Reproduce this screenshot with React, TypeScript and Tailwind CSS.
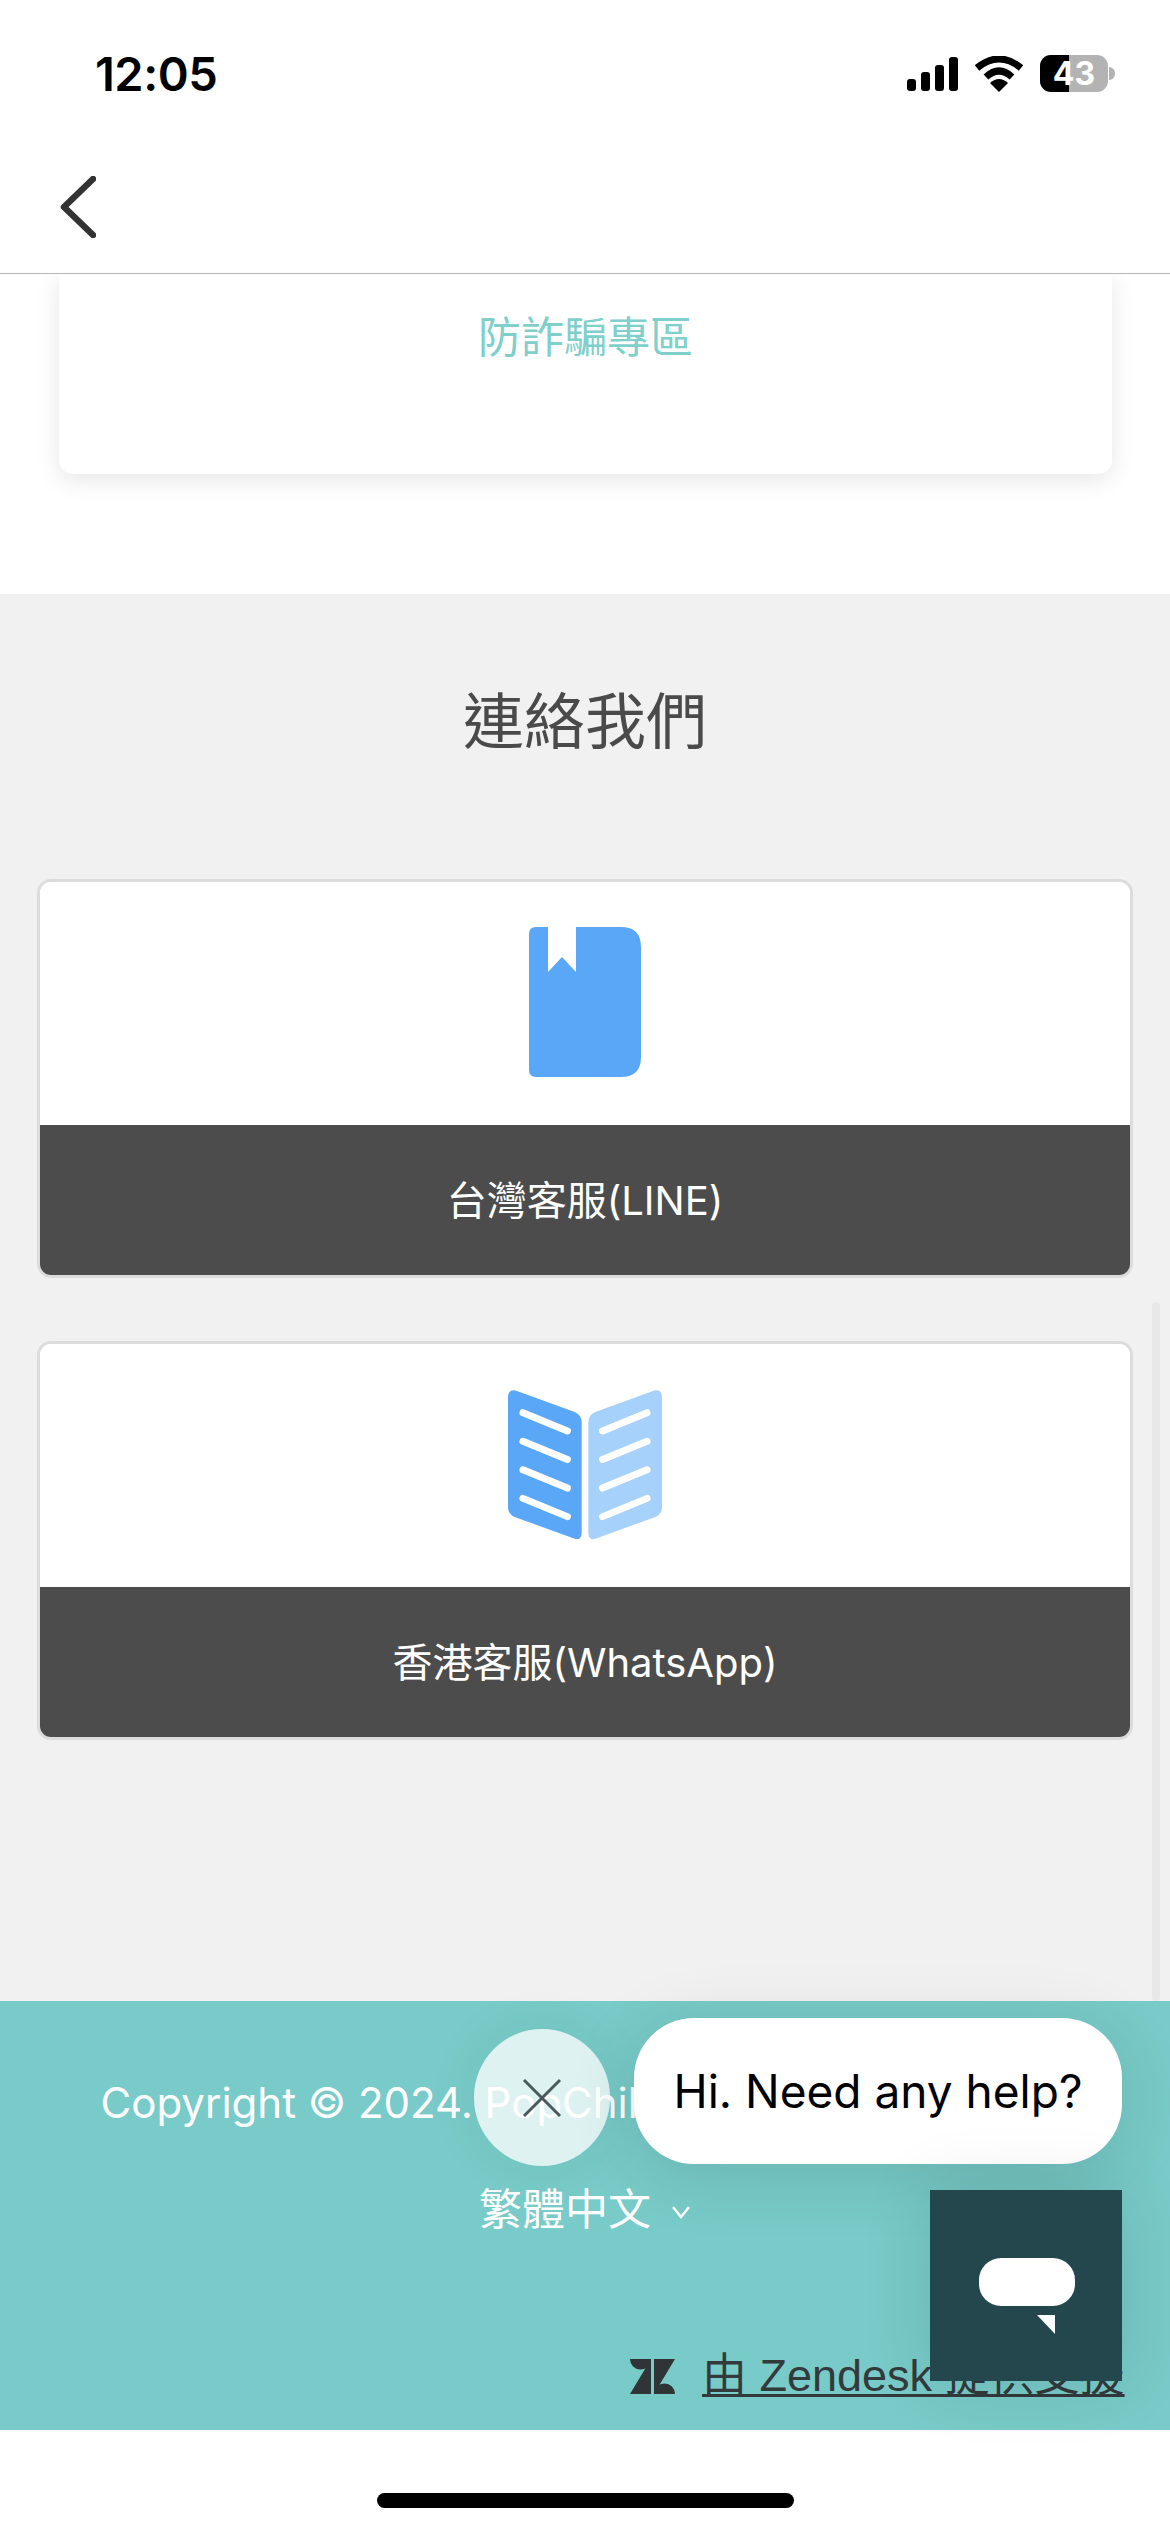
const cjk = "font-['Inter','Noto_Sans_CJK_TC',sans-serif]";

function StatusIcons() {
  return (
    <div className="flex items-center">
      <svg width="51" height="34" viewBox="0 0 51 34" className="mr-[17px]">
        <rect x="0" y="22" width="9" height="12" rx="3" fill="#000" />
        <rect x="14" y="15" width="9" height="19" rx="3" fill="#000" />
        <rect x="28" y="8" width="9" height="26" rx="3" fill="#000" />
        <rect x="42" y="0" width="9" height="34" rx="3" fill="#000" />
      </svg>
      <svg width="48" height="36" viewBox="0 0 48 36" className="mr-[17px]">
        <path d="M2 12 Q24 -6 46 12" fill="none" stroke="#000" strokeWidth="7" />
        <path d="M11 21 Q24 9 37 21" fill="none" stroke="#000" strokeWidth="7" />
        <path d="M15 27 Q24 19 33 27 L24 36 Z" fill="#000" />
      </svg>
      <div className="relative w-[68px] h-[37px] rounded-[11px] bg-[#b3b3b3] overflow-hidden">
        <div className="absolute inset-y-0 left-0 w-[29px] bg-black" />
        <div className="absolute inset-0 flex items-center justify-center text-white font-bold text-[32px] leading-[37px] font-['Inter',sans-serif]">
          43
        </div>
      </div>
      <div className="w-[6px] h-[13px] ml-[1px] rounded-r-full bg-[#b3b3b3]" />
    </div>
  );
}

function BookIcon() {
  return (
    <svg width="112" height="150" viewBox="0 0 112 150">
      <path
        d="M7 0 H19 V45 L33 30 L47 45 V0 H92 Q112 0 112 20 V130 Q112 150 92 150 H7 Q0 150 0 143 V7 Q0 0 7 0 Z"
        fill="#5aa7f8"
      />
    </svg>
  );
}

function OpenBookIcon() {
  const ys = [0, 86, 172, 258];
  return (
    <svg width="154" height="151" viewBox="113 85 464 452">
      <path
        d="M113 110 Q113 80 142 90 L312 152 Q335 160 335 185 V515 Q335 544 310 533 L135 470 Q113 462 113 440 Z"
        fill="#5aa7f8"
      />
      <path
        d="M577 110 Q577 80 548 90 L378 152 Q355 160 355 185 V515 Q355 544 380 533 L555 470 Q577 462 577 440 Z"
        fill="#a6d1fb"
      />
      {ys.map((y) => (
        <g key={y} stroke="#fff" strokeWidth="21" strokeLinecap="round">
          <line x1="158" y1={155 + y} x2="292" y2={210 + y} />
          <line x1="532" y1={155 + y} x2="398" y2={210 + y} />
        </g>
      ))}
    </svg>
  );
}

function ContactCard({ label, icon }: { label: string; icon: React.ReactNode }) {
  return (
    <div className="h-[399px] rounded-[14px] border-[3px] border-[#dcdcdc] overflow-hidden flex flex-col">
      <div className="h-[243px] bg-white flex items-center justify-center pb-[3px]">{icon}</div>
      <div className={`flex-1 bg-[#4c4c4c] text-white text-[40px] flex items-center justify-center pt-[2px] ${cjk}`}>
        {label}
      </div>
    </div>
  );
}

function ChatWidget() {
  return (
    <>
      <div className="absolute left-[474px] top-[2029px] w-[136px] h-[137px] rounded-full bg-white/75 shadow-[0_0_60px_rgba(0,0,0,0.06)] flex items-center justify-center">
        <svg width="40" height="40" viewBox="0 0 40 40">
          <path d="M2 2 L38 38 M38 2 L2 38" stroke="#4a5a5c" strokeWidth="3" fill="none" />
        </svg>
      </div>
      <div className="absolute left-[634px] top-[2018px] w-[488px] h-[146px] rounded-[60px] bg-white shadow-[0_10px_70px_rgba(0,0,0,0.12)] flex items-center justify-center text-black text-[46px] font-['Inter',sans-serif]">
        Hi. Need any help?
      </div>
      <div className="absolute left-[930px] top-[2190px] w-[192px] h-[191px] bg-[#24474d] shadow-[0_0_70px_rgba(0,0,0,0.12)]">
        <div className="absolute left-[49px] top-[68px] w-[96px] h-[48px] rounded-[22px] bg-white" />
        <svg width="18" height="19" viewBox="0 0 18 19" className="absolute left-[107px] top-[125px]">
          <path d="M0 0 H18 V19 Z" fill="#fff" />
        </svg>
      </div>
    </>
  );
}

export default function App() {
  return (
    <div className={`relative w-[1170px] h-[2532px] overflow-hidden bg-white flex flex-col ${cjk}`}>
      {/* status bar */}
      <div className="h-[136px] flex items-start justify-between pt-[55px] pl-[95px] pr-[55px]">
        <span className="text-black font-semibold text-[47px] leading-[38px] tracking-[-0.5px] font-['Inter',sans-serif]">
          12:05
        </span>
        <StatusIcons />
      </div>

      {/* nav */}
      <div className="h-[138px] border-b border-[#b5b5b5] flex items-start pl-[60px] pt-[40px] relative z-10 bg-white">
        <svg width="36" height="62" viewBox="0 0 36 62">
          <path d="M33 3 L4 31 L33 59" fill="none" stroke="#333" strokeWidth="6.5" strokeLinecap="round" strokeLinejoin="round" />
        </svg>
      </div>

      <div className="h-[320px] px-[59px]">
        <div className="h-[200px] w-[1053px] bg-white rounded-b-[14px] shadow-[0_6px_24px_rgba(0,0,0,0.10)] flex justify-center pt-[33px]">
          <span className="text-[#7fcfcb] text-[43px] leading-[60px]">防詐騙專區</span>
        </div>
      </div>

      {/* contact */}
      <div className="h-[1407px] bg-[#f1f1f1] px-[37px] pt-[90px]">
        <h2 className="text-center text-[#4a4a4a] text-[61px] leading-[76px] font-normal mb-[119px]">連絡我們</h2>
        <div className="w-[1096px] flex flex-col gap-[63px]">
          <ContactCard label="台灣客服(LINE)" icon={<BookIcon />} />
          <ContactCard label="香港客服(WhatsApp)" icon={<OpenBookIcon />} />
        </div>
      </div>

      {/* footer */}
      <div className="h-[429px] bg-[#78cbc8] flex flex-col items-center pt-[70px] text-white">
        <p className="text-[42px] leading-[64px] whitespace-nowrap">Copyright © 2024. PopChill Technology Co., Ltd.</p>
        <div className="mt-[42px] flex items-center gap-[20px] text-[43px] leading-[64px]">
          <span>繁體中文</span>
          <svg width="20" height="14" viewBox="0 0 20 14" className="mt-[6px]">
            <path d="M2 2 L10 12 L18 2" fill="none" stroke="#fff" strokeWidth="2.5" />
          </svg>
        </div>
      </div>

      {/* home indicator */}
      <div className="flex-1 flex justify-center pt-[63px]">
        <div className="w-[417px] h-[15px] rounded-full bg-black" />
      </div>

      {/* scrollbar */}
      <div className="absolute left-[1152px] top-[1302px] w-[8px] h-[699px] rounded-full bg-[#e8e8e8]" />

      {/* zendesk badge */}
      <div className="absolute left-[630px] top-[2353px] flex items-center gap-[27px] text-[#333a3c]">
        <svg width="45" height="35" viewBox="0 0 45 35">
          <path d="M0 0 H21 A10.5 10.5 0 0 1 0 0 Z M24 0 H45 L24 35 Z M21 35 H0 L21 0 Z M24 35 A10.5 10.5 0 0 1 45 35 Z" fill="#2f3437" />
        </svg>
        <span className="text-[45px] leading-[46px] underline decoration-[3px] underline-offset-[3px] whitespace-nowrap font-['Liberation_Sans','Noto_Sans_CJK_TC',sans-serif]">
          由 Zendesk 提供支援
        </span>
      </div>

      <ChatWidget />
    </div>
  );
}
